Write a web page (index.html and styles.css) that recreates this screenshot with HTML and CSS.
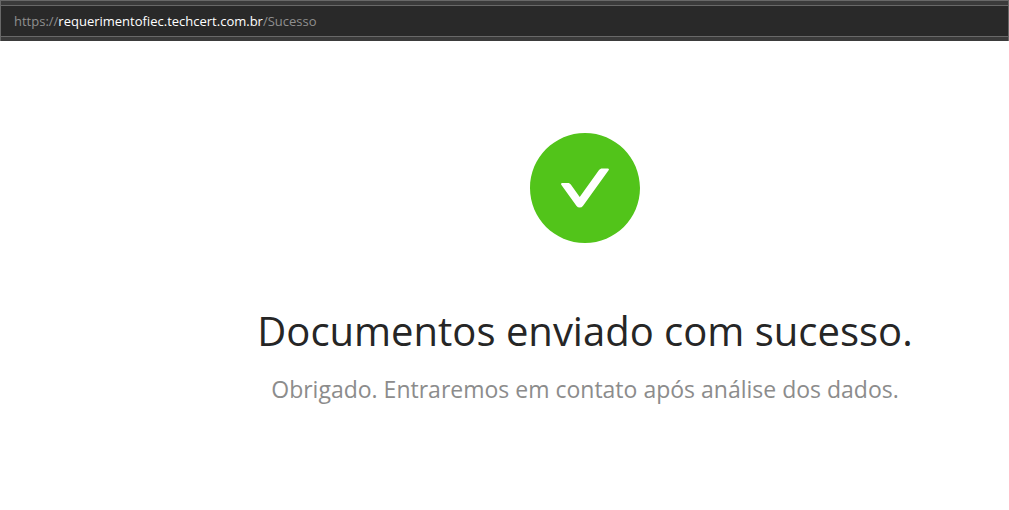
FILE: index.html
```html
<!DOCTYPE html>
<html lang="pt-BR">
<head>
<meta charset="utf-8">
<title>Sucesso</title>
<link rel="stylesheet" href="styles.css">
</head>
<body>
<header class="bar">
  <div class="address"><span>https://</span><strong class="host">requerimentofiec.techcert.com.br</strong><span>/Sucesso</span></div>
</header>
<main class="result">
  <svg class="icon" viewBox="64 64 896 896" aria-hidden="true">
    <path fill="#52c41a" d="M512 64C264.600 64 64 264.600 64 512s200.600 448 448 448 448-200.600 448-448S759.400 64 512 64zm193.500 301.700l-210.600 292a31.800 31.800 0 0 1-51.700 0L318.500 484.900c-3.800-5.300 0-12.700 6.500-12.700h46.900c10.200 0 19.900 4.900 25.900 13.300l71.200 98.800 157.200-218c6-8.300 15.600-13.300 25.900-13.300H699c6.500 0 10.300 7.400 6.500 12.700z"/>
  </svg>
  <h1 class="title">Documentos enviado com sucesso.</h1>
  <p class="subtitle">Obrigado. Entraremos em contato após análise dos dados.</p>
</main>
</body>
</html>
```
FILE: styles.css
```css
* { box-sizing: border-box; }
body {
  margin: 0;
  min-height: 100vh;
  background: #fff;
  font-family: "Segoe UI", "Open Sans", "Noto Sans", sans-serif;
}
.bar {
  padding: 4px 0;
  border: 1px solid #686868;
  border-bottom: 0;
  background: #3b3b3b;
}
.address {
  padding: 0 13px;
  border: solid #686868;
  border-width: 1px 0;
  background: #292929;
  color: #8f8f8f;
  font-size: 13px;
  line-height: 30px;
}
.host { color: #fff; font-weight: 400; }
.result {
  display: flex;
  flex-direction: column;
  align-items: center;
  padding: 92px 0 80px 161px;
  text-align: center;
}
.icon { width: 110px; height: 110px; }
.title {
  margin: 58px 0 0;
  color: #262626;
  font-size: 40px;
  font-weight: 400;
  line-height: 60px;
}
.subtitle {
  margin: 10px 0 0;
  color: #8c8c8c;
  font-size: 23px;
  line-height: 36px;
}
```
